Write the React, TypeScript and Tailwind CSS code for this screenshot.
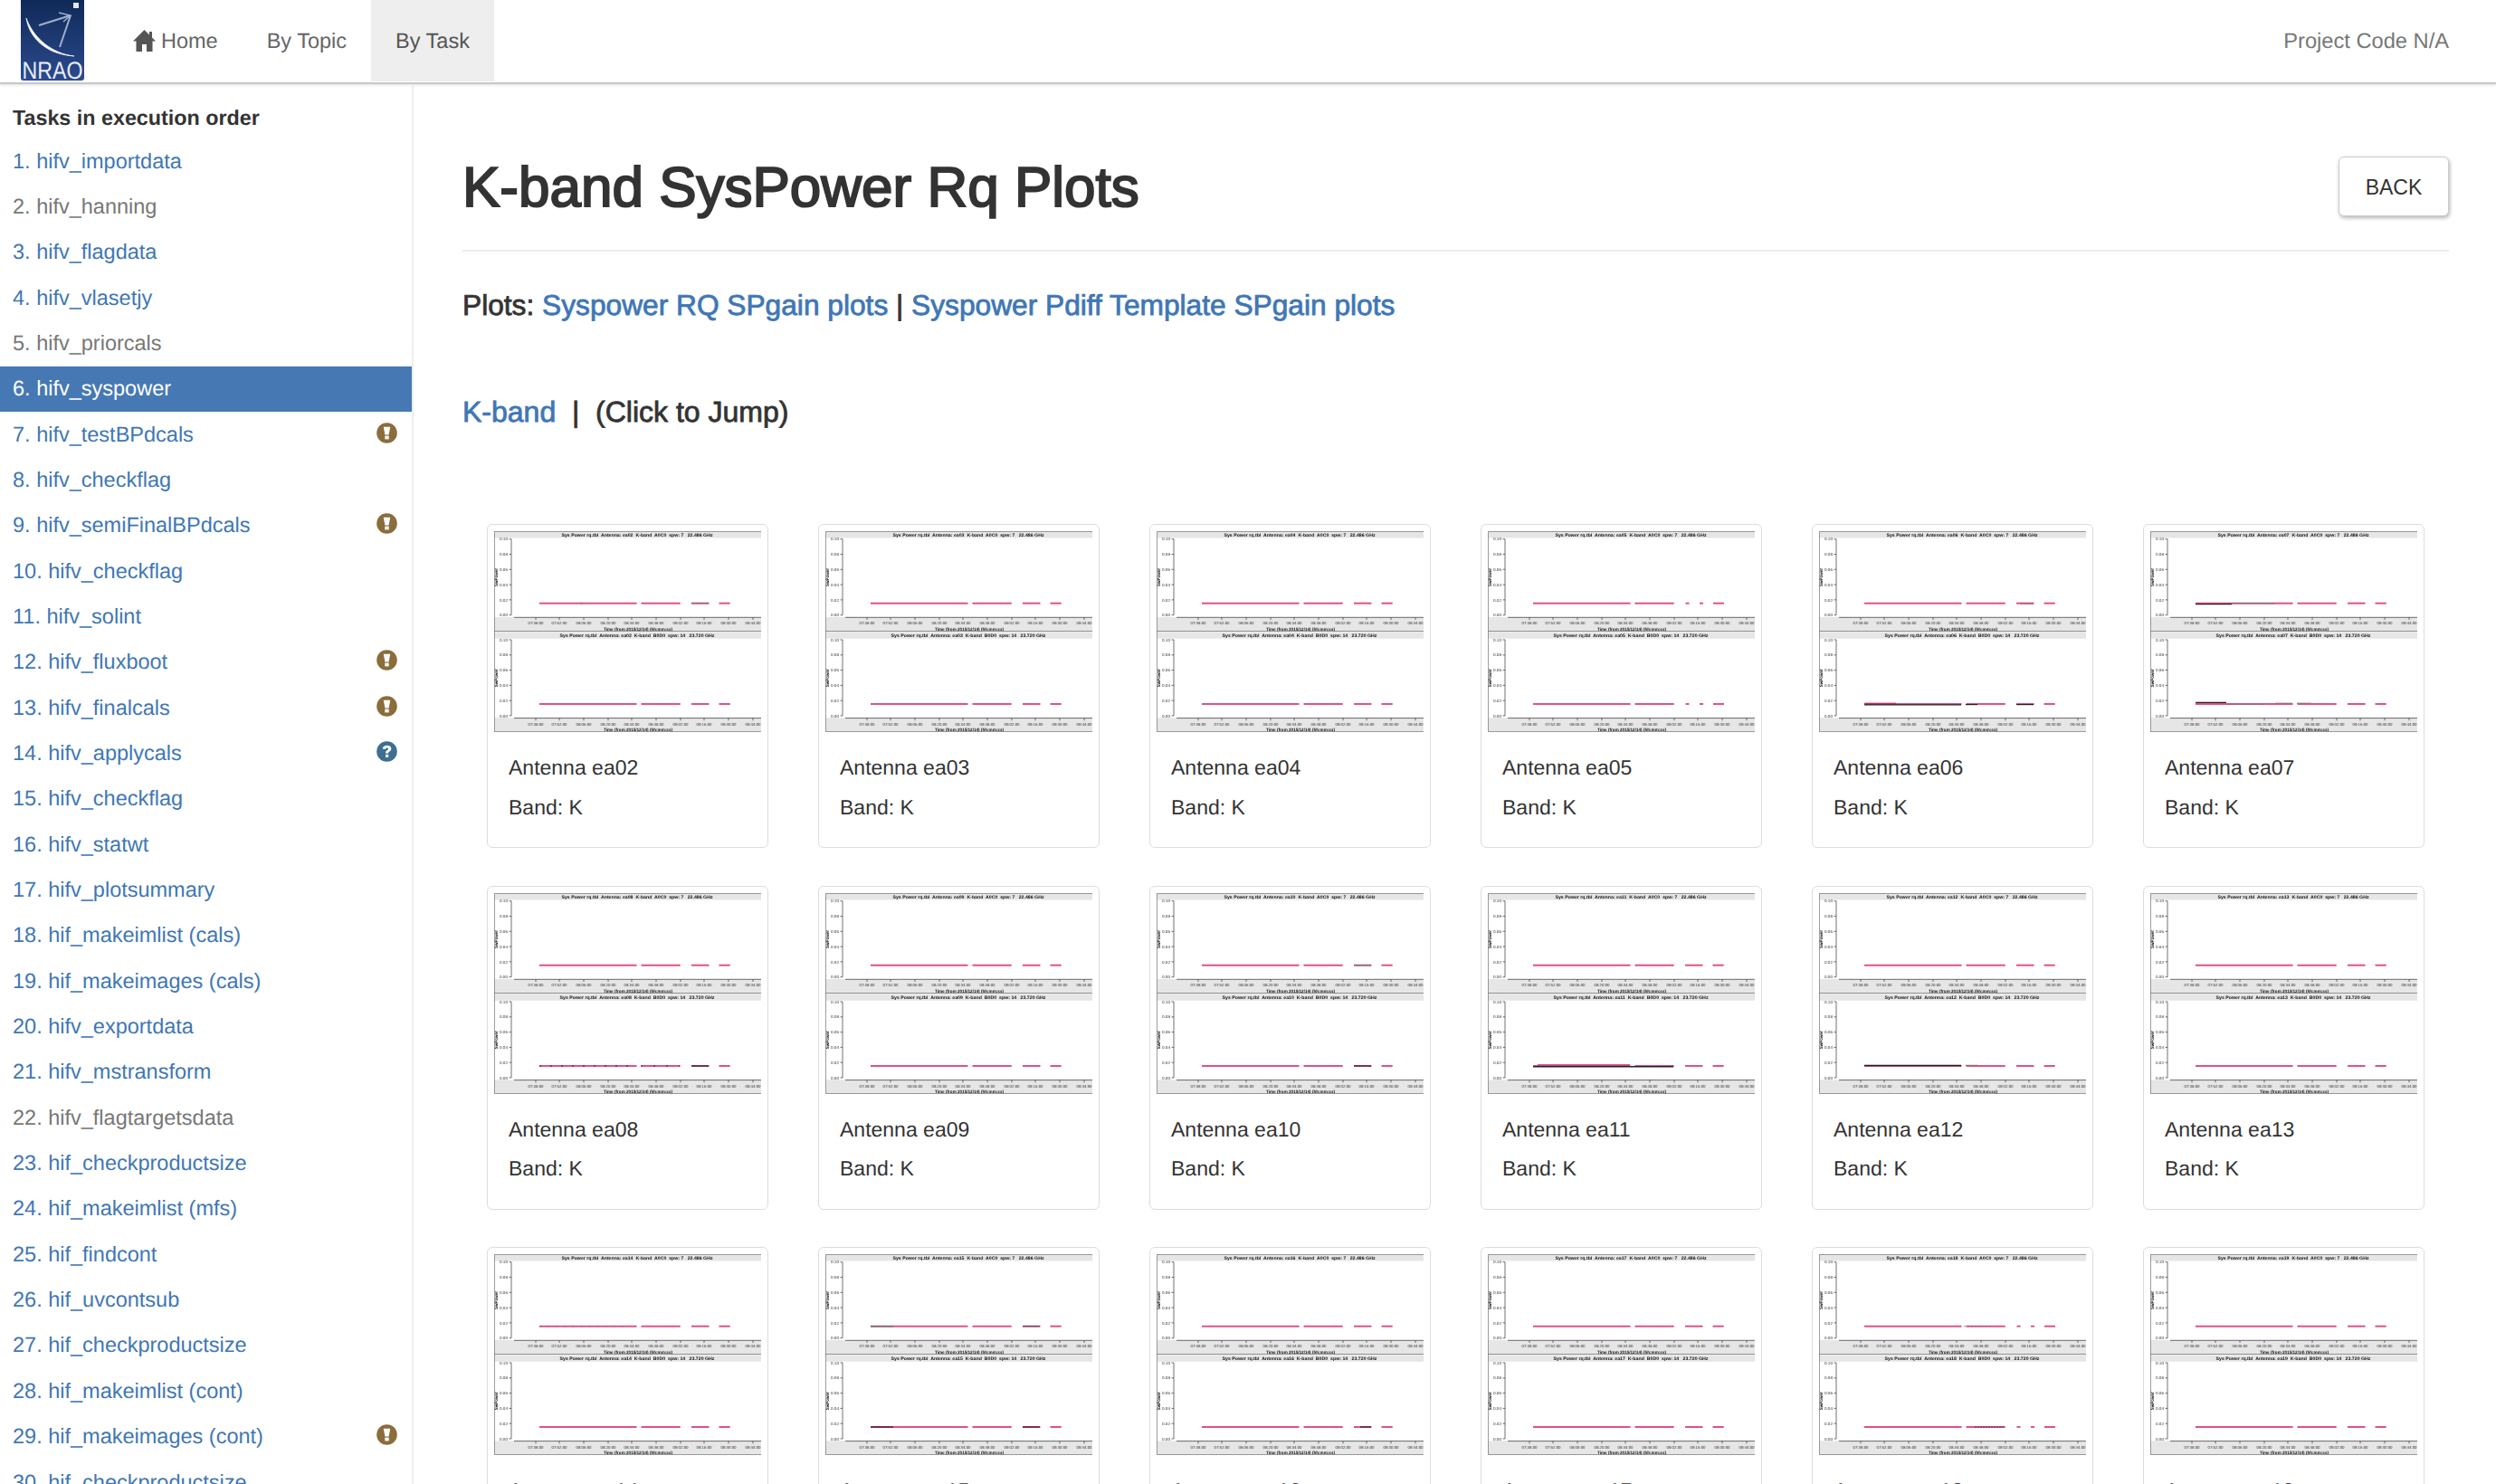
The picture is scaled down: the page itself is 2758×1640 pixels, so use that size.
import { ReactNode } from 'react';

type Mark = { p: 0 | 1; x1: number; x2: number; dy?: number; w?: number; c?: string; dash?: string };
type Ant = { name: string; broken?: boolean; marks?: Mark[] };

const TASKS: { label: string; muted?: boolean; icon?: 'warn' | 'help' }[] = [
  { label: '1. hifv_importdata' },
  { label: '2. hifv_hanning', muted: true },
  { label: '3. hifv_flagdata' },
  { label: '4. hifv_vlasetjy' },
  { label: '5. hifv_priorcals', muted: true },
  { label: '6. hifv_syspower' },
  { label: '7. hifv_testBPdcals', icon: 'warn' },
  { label: '8. hifv_checkflag' },
  { label: '9. hifv_semiFinalBPdcals', icon: 'warn' },
  { label: '10. hifv_checkflag' },
  { label: '11. hifv_solint' },
  { label: '12. hifv_fluxboot', icon: 'warn' },
  { label: '13. hifv_finalcals', icon: 'warn' },
  { label: '14. hifv_applycals', icon: 'help' },
  { label: '15. hifv_checkflag' },
  { label: '16. hifv_statwt' },
  { label: '17. hifv_plotsummary' },
  { label: '18. hif_makeimlist (cals)' },
  { label: '19. hif_makeimages (cals)' },
  { label: '20. hifv_exportdata' },
  { label: '21. hifv_mstransform' },
  { label: '22. hifv_flagtargetsdata', muted: true },
  { label: '23. hif_checkproductsize' },
  { label: '24. hif_makeimlist (mfs)' },
  { label: '25. hif_findcont' },
  { label: '26. hif_uvcontsub' },
  { label: '27. hif_checkproductsize' },
  { label: '28. hif_makeimlist (cont)' },
  { label: '29. hif_makeimages (cont)', icon: 'warn' },
  { label: '30. hif_checkproductsize' },
];

const DARK = '#222';
const GREY = '#777';

const ANTENNAS: Ant[] = [
  { name: 'ea02', marks: [{ p: 0, x1: 218, x2: 237, c: GREY, w: 1 }, { p: 0, x1: 95, x2: 98, c: GREY, w: 1 }] },
  { name: 'ea03' },
  { name: 'ea04' },
  { name: 'ea05', broken: true },
  { name: 'ea06', marks: [
    { p: 1, x1: 50, x2: 157, dy: 0.8, c: DARK, w: 1.2 },
    { p: 1, x1: 50, x2: 85, dy: -0.8, c: '#b01c5c', w: 1 },
    { p: 1, x1: 162, x2: 175, dy: 0.6, c: DARK, w: 1.2 },
    { p: 1, x1: 218, x2: 237, dy: 0.6, c: DARK, w: 1.2 },
    { p: 0, x1: 222, x2: 237, dy: 0.6, c: GREY, w: 0.8 },
  ] },
  { name: 'ea07', marks: [
    { p: 0, x1: 50, x2: 90, dy: 1, c: DARK, w: 1.2 },
    { p: 0, x1: 90, x2: 138, c: GREY, w: 1.2 },
    { p: 1, x1: 50, x2: 84, dy: -1.6, c: DARK, w: 1.3 },
    { p: 1, x1: 84, x2: 125, dy: 0.6, c: GREY, w: 0.8 },
    { p: 1, x1: 138, x2: 157, dy: -0.8, c: GREY, w: 1 },
    { p: 1, x1: 162, x2: 178, dy: -0.8, c: GREY, w: 1 },
  ] },
  { name: 'ea08', marks: [
    { p: 1, x1: 50, x2: 157, c: DARK, w: 1, dash: '2 10' },
    { p: 1, x1: 162, x2: 205, c: DARK, w: 1, dash: '2 12' },
    { p: 1, x1: 218, x2: 237, c: DARK, w: 1.2 },
  ] },
  { name: 'ea09' },
  { name: 'ea10', marks: [
    { p: 0, x1: 218, x2: 237, c: GREY, w: 1.2 },
    { p: 1, x1: 218, x2: 237, c: DARK, w: 1.1 },
  ] },
  { name: 'ea11', marks: [
    { p: 1, x1: 50, x2: 205, dy: 0.7, c: DARK, w: 1.4 },
    { p: 1, x1: 55, x2: 157, dy: -1.2, c: '#c02a68', w: 1.2 },
  ] },
  { name: 'ea12', marks: [
    { p: 1, x1: 50, x2: 157, dy: -0.6, c: DARK, w: 1.5 },
    { p: 1, x1: 162, x2: 175, dy: -0.6, c: GREY, w: 1.2 },
  ] },
  { name: 'ea13' },
  { name: 'ea14', marks: [{ p: 0, x1: 50, x2: 150, c: GREY, w: 0.8, dash: '3 6' }] },
  { name: 'ea15', marks: [
    { p: 0, x1: 50, x2: 75, c: GREY, w: 1.6 },
    { p: 0, x1: 218, x2: 237, c: '#555', w: 1.1 },
    { p: 1, x1: 50, x2: 75, c: '#3a1022', w: 1.2 },
    { p: 1, x1: 218, x2: 237, c: '#3a1022', w: 1.1 },
  ] },
  { name: 'ea16', marks: [{ p: 1, x1: 225, x2: 237, c: DARK, w: 1.1 }] },
  { name: 'ea17' },
  { name: 'ea18', broken: true, marks: [
    { p: 0, x1: 160, x2: 190, c: GREY, w: 0.8, dash: '2 2' },
    { p: 1, x1: 172, x2: 205, c: DARK, w: 0.8, dash: '2 1' },
  ] },
  { name: 'ea19' },
];

const TICKS = [
  ['07:38:00', 46], ['07:52:00', 72], ['08:06:00', 99], ['08:20:00', 126], ['08:34:00', 152],
  ['08:48:00', 179], ['09:02:00', 206], ['09:16:00', 232], ['09:30:00', 259], ['09:44:00', 286],
] as const;

const SEGMENTS = [[50, 157.5], [162.5, 205.7], [218, 237.5], [248.5, 260.7]];
const BROKEN = [[50, 157.5], [162.5, 205.7], [218.5, 222.5], [234, 238], [249, 261]];
const Y_LABELS = ['0.10', '0.08', '0.06', '0.04', '0.02', '0.00'];

function PlotPanel({ ant, p }: { ant: Ant; p: 0 | 1 }) {
  // both panels share the same drawing, the second one is shifted down
  const off = p === 0 ? 0 : 111.3;
  const dataY = 79.7 + off;
  const segs = ant.broken ? BROKEN : SEGMENTS;
  const title = p === 0
    ? `Sys Power rq.tbl  Antenna: ${ant.name}  K-band  A0C0  spw: 7   22.486 GHz`
    : `Sys Power rq.tbl  Antenna: ${ant.name}  K-band  B0D0  spw: 14   23.720 GHz`;
  return (
    <g>
      <rect x="0" y={off} width="295" height="7.5" fill="#e6e6e6" />
      <rect x="0" y={95 + off} width="295" height="15.5" fill="#e6e6e6" />
      <text x="158" y={5.6 + off} textAnchor="middle" fontSize="5" fontWeight="700" fill="#111" xmlSpace="preserve"
        textLength={p === 0 ? 167 : 171} lengthAdjust="spacingAndGlyphs">{title}</text>
      <line x1="19" x2="19" y1={8.7 + off} y2={92.7 + off} stroke="#333" strokeWidth="0.7" />
      {Y_LABELS.map((l, i) => (
        <g key={l}>
          <text x="6" y={10.3 + i * 16.8 + off} fontSize="4.4" fill="#333" textLength="9" lengthAdjust="spacingAndGlyphs">{l}</text>
          <line x1="16.5" x2="19" y1={8.7 + i * 16.8 + off} y2={8.7 + i * 16.8 + off} stroke="#333" strokeWidth="0.7" />
        </g>
      ))}
      <text transform={`translate(3.8 ${51 + off}) rotate(-90)`} textAnchor="middle" fontSize="5" fontWeight="700" fill="#111"
        textLength="20" lengthAdjust="spacingAndGlyphs">SwPower</text>
      <line x1="22" x2="295" y1={95.3 + off} y2={95.3 + off} stroke="#333" strokeWidth="0.7" />
      {TICKS.map(([l, x]) => (
        <g key={l}>
          <line x1={x} x2={x} y1={95.3 + off} y2={98 + off} stroke="#333" strokeWidth="0.7" />
          <text x={x} y={103.4 + off} textAnchor="middle" fontSize="4.4" fill="#333" textLength="17" lengthAdjust="spacingAndGlyphs">{l}</text>
        </g>
      ))}
      <text x="159" y={109.8 + off} textAnchor="middle" fontSize="4.8" fontWeight="700" fill="#111"
        textLength="76" lengthAdjust="spacingAndGlyphs">Time (from 2015/12/14) (hh:mm:ss)</text>
      {segs.map(([a, b]) => (
        <line key={a} x1={a} x2={b} y1={dataY} y2={dataY} stroke="#e2508c" strokeWidth="2" />
      ))}
      {(ant.marks ?? []).filter(m => m.p === p).map((m, i) => (
        <line key={i} x1={m.x1} x2={m.x2} y1={dataY + (m.dy ?? 0)} y2={dataY + (m.dy ?? 0)}
          stroke={m.c ?? DARK} strokeWidth={m.w ?? 1} strokeDasharray={m.dash} />
      ))}
    </g>
  );
}

function Plot({ ant }: { ant: Ant }) {
  return (
    <svg viewBox="0 0 295 222" className="block h-[222px] w-[295px] blur-[0.5px]" style={{ fontFamily: '"Liberation Sans", sans-serif' }}>
      <rect width="295" height="222" fill="#fff" />
      <PlotPanel ant={ant} p={0} />
      <PlotPanel ant={ant} p={1} />
      <path d="M295 .4H.4v221.2H295M0 110.5h295" fill="none" stroke="#777" strokeWidth="0.8" />
    </svg>
  );
}

function AntennaCard({ ant }: { ant: Ant }) {
  return (
    <div className="mx-[27px] mb-[41.5px] h-[358px] w-[311px] rounded-[6px] border border-[#ddd] bg-white p-[7px]">
      <Plot ant={ant} />
      <div className="px-[16px] pt-[23px] text-[23px] leading-[33px] text-[#333]">
        <p className="mb-[10.5px]">Antenna {ant.name}</p>
        <p>Band: K</p>
      </div>
    </div>
  );
}

function WarnIcon() {
  return (
    <svg viewBox="0 0 23 23" className="h-[23px] w-[23px]">
      <circle cx="11.5" cy="11.5" r="11.3" fill="#8a6d3b" />
      <path d="M7.8 4.8h7.4l-1.6 8.6H9.4z" fill="#fff" />
      <rect x="9.3" y="14.6" width="4.4" height="3.8" fill="#fff" />
    </svg>
  );
}

function HelpIcon() {
  return (
    <svg viewBox="0 0 23 23" className="h-[23px] w-[23px]">
      <circle cx="11.5" cy="11.5" r="11.3" fill="#3d6f91" />
      <path d="M6.8 8.6c.3-2.6 2.2-3.8 4.8-3.8 2.7 0 4.7 1.4 4.7 3.6 0 3-3.2 2.7-3.2 5h-3c0-3.6 3-3.2 3-4.9 0-.7-.6-1.1-1.5-1.1-1 0-1.6.5-1.8 1.5z" fill="#fff" />
      <rect x="10" y="14.8" width="3.2" height="3.2" fill="#fff" />
    </svg>
  );
}

function NraoLogo() {
  return (
    <svg viewBox="0 0 70 90" className="h-[90px] w-[70px] overflow-visible">
      <defs>
        <linearGradient id="nrao-bg" x1="0" y1="0" x2="0" y2="1">
          <stop offset="0" stopColor="#0f2a58" />
          <stop offset="1" stopColor="#2c4a8e" />
        </linearGradient>
      </defs>
      <path d="M0 0h70v86a3 3 0 0 1-3 3H3a3 3 0 0 1-3-3z" fill="url(#nrao-bg)" />
      <path d="M6 20C9 40 26 60 59 62 34 59 14 42 6 20z" fill="#fff" stroke="#e8eef8" strokeWidth="0.8" />
      <path d="M20 28 55 17M55 17 43 52" stroke="#9fb0cc" strokeWidth="2" fill="none" />
      <path d="M42 14 55 17 47 24" stroke="#9fb0cc" strokeWidth="1.4" fill="none" />
      <rect x="58" y="3" width="6" height="6" fill="#e4e8f0" />
      <text x="1.5" y="87" fontSize="27" fill="#e8eef8" textLength="67" lengthAdjust="spacingAndGlyphs" style={{ fontFamily: '"Liberation Sans", sans-serif' }}>NRAO</text>
    </svg>
  );
}

function HomeIcon() {
  return (
    <svg viewBox="0 0 25 24" className="mr-[6px] h-[24px] w-[25px] -translate-y-[1px]" fill="#555">
      <path d="M12.5 0 18 5.500V2h3v6.500L25 12.500h-3.500V24H15v-8h-5v8H3.500V12.500H0z" />
    </svg>
  );
}

function NavItem({ active, children }: { active?: boolean; children: ReactNode }) {
  return (
    <div className={active
      ? 'flex h-[90px] items-center bg-[#eee] px-[27px] pt-[1px] text-[#555]'
      : 'flex h-[90px] items-center px-[27px] pt-[1px] text-[#666]'}>
      {children}
    </div>
  );
}

export default function App() {
  return (
    <div className="flex h-[1640px] w-[2758px] flex-col overflow-hidden bg-white text-[23.5px] text-[#333] [text-rendering:geometricPrecision]" style={{ fontFamily: '"Liberation Sans", Arial, sans-serif' }}>
      {/* Header */}
      <header className="flex h-[93px] shrink-0 items-start border-b-2 border-[#c8c8c8] shadow-[0_1px_3px_rgba(0,0,0,0.12)]">
        <div className="ml-[23px] mr-[27px]"><NraoLogo /></div>
        <NavItem><HomeIcon />Home</NavItem>
        <NavItem>By Topic</NavItem>
        <NavItem active>By Task</NavItem>
        <div className="ml-auto mr-[52px] flex h-[90px] items-center pt-[4px] text-[23.66px] text-[#777]">Project Code N/A</div>
      </header>

      <div className="flex min-h-0 flex-1">
        {/* Sidebar */}
        <aside className="w-[457px] shrink-0 overflow-hidden border-r-2 border-[#eee]">
          <h2 className="pl-[14px] pt-[24px] text-[23.3px] font-bold leading-[26px] text-[#333]">Tasks in execution order</h2>
          <ul className="mt-[10px]">
            {TASKS.map((t, i) => (
              <li key={t.label}
                className={i === 5
                  ? 'flex h-[50.35px] items-center bg-[#4678b4] pl-[14px] text-white'
                  : t.muted
                    ? 'flex h-[50.35px] items-center pl-[14px] text-[#777]'
                    : 'flex h-[50.35px] items-center pl-[14px] text-[#3f77b5]'}>
                <span className="whitespace-nowrap">{t.label}</span>
                {t.icon && <span className="ml-auto mr-[16px] flex -translate-y-[2px]">{t.icon === 'warn' ? <WarnIcon /> : <HelpIcon />}</span>}
              </li>
            ))}
          </ul>
        </aside>

        {/* Main */}
        <main className="min-w-0 flex-1 overflow-hidden pl-[54px] pr-[52px]">
          <div className="flex h-[185px] items-start justify-between border-b-2 border-[#eee]">
            <h1 className="mt-[79px] text-[62px] leading-[72px] text-[#333] [-webkit-text-stroke:2px_#333]">K-band SysPower Rq Plots</h1>
            <button className="mt-[80px] flex h-[66px] w-[122px] items-center justify-center rounded-[6px] border border-[#ccc] bg-white pt-[2px] text-[23px] text-[#333] shadow-[1px_2px_4px_rgba(0,0,0,0.3)]">BACK</button>
          </div>

          <div className="mt-[41px] flex h-[38px] items-center whitespace-pre text-[31.7px] [-webkit-text-stroke:0.8px]">
            <span>Plots: </span>
            <span className="text-[#3f77b5]">Syspower RQ SPgain plots</span>
            <span> | </span>
            <span className="text-[#3f77b5]">Syspower Pdiff Template SPgain plots</span>
          </div>

          <div className="mt-[79px] flex h-[38px] items-center whitespace-pre text-[32px] [-webkit-text-stroke:0.8px]">
            <span className="text-[#3f77b5]">K-band</span>
            <span>  |  </span>
            <span>(Click to Jump)</span>
          </div>

          <div className="mt-[105px] grid w-[2196px] grid-cols-6">
            {ANTENNAS.map(a => <AntennaCard key={a.name} ant={a} />)}
          </div>
        </main>
      </div>
    </div>
  );
}
